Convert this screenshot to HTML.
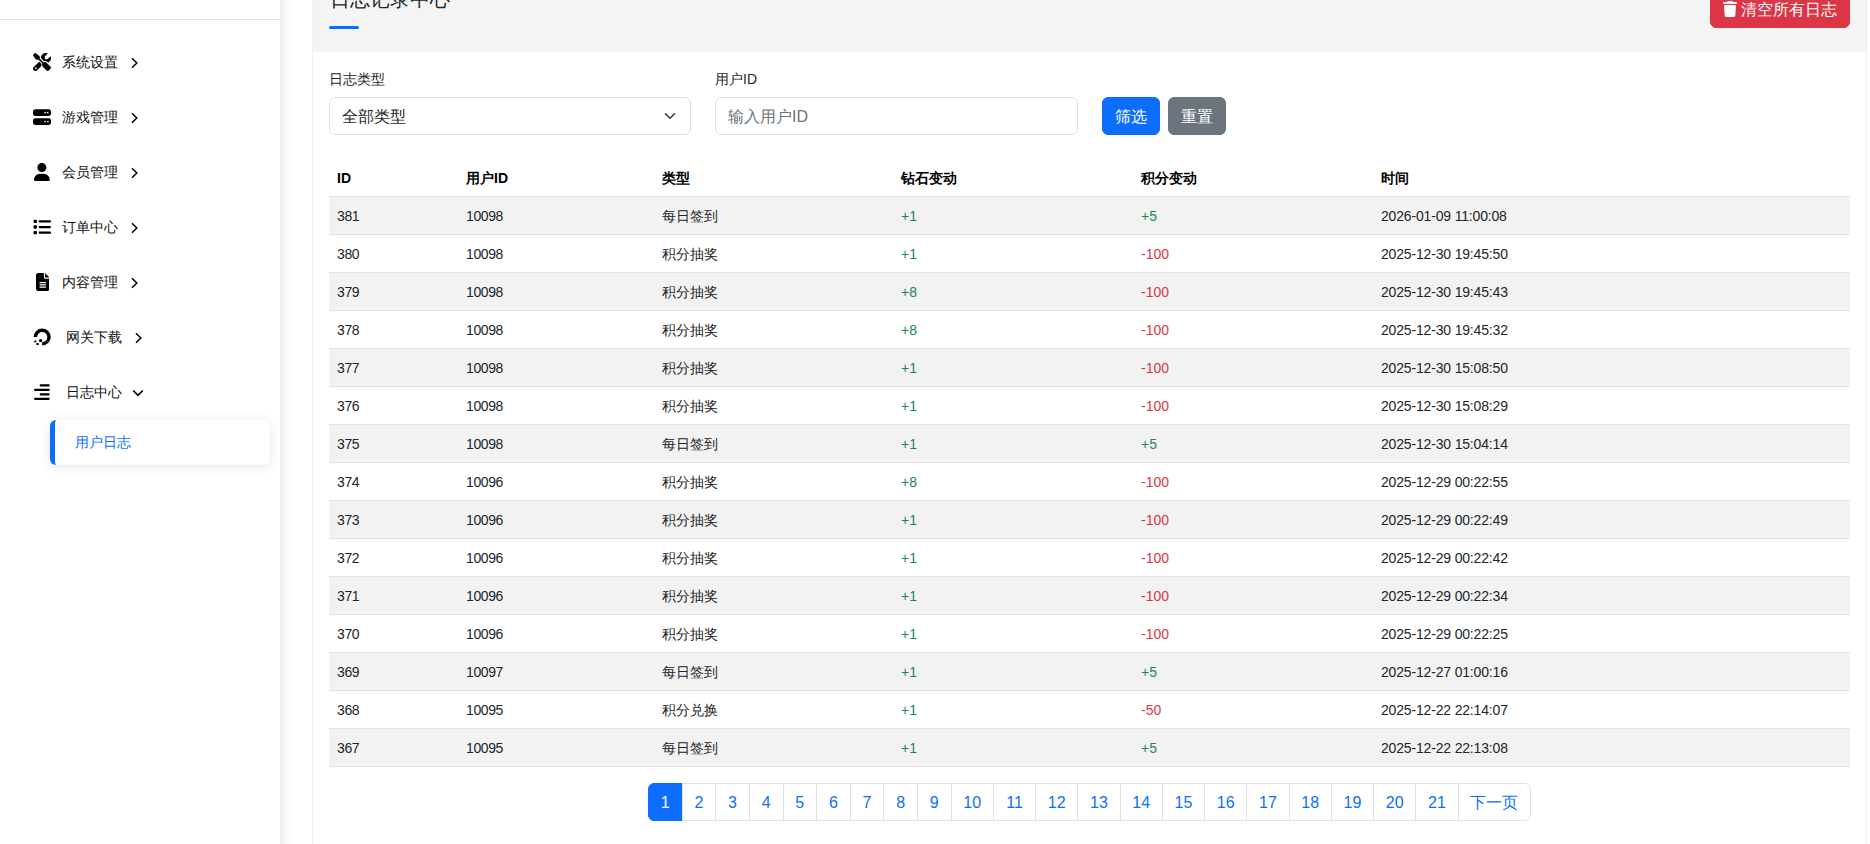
<!DOCTYPE html>
<html><head><meta charset="utf-8">
<style>
*{box-sizing:border-box;margin:0;padding:0}
html,body{width:1870px;height:844px;overflow:hidden;background:#fff;font-family:"Liberation Sans",sans-serif;color:#212529}
.sb{position:absolute;left:0;top:0;width:280px;height:844px;background:#fff}
.sbshadow{position:absolute;left:280px;top:0;width:14px;height:844px;background:linear-gradient(to right,#ececec,#fafafa 50%,#fff)}
.sbline{position:absolute;left:0;top:19px;width:280px;height:1px;background:#dee2e6}
.mtxt{position:absolute;height:20px;font-size:14px;line-height:20px;color:#111;white-space:nowrap}
.mi{position:absolute;left:0;height:20px;font-size:14px;line-height:20px;color:#212529;white-space:nowrap}
.mi svg.ic{position:absolute;left:33px;top:1px}
.mi span{position:absolute;left:62px;top:0}
.mi svg.ch{position:absolute}
.sb svg{position:absolute}
.sub{position:absolute;left:50px;top:420px;width:220px;height:45px;background:#fff;border-radius:6px;border-left:5px solid #0d6efd;box-shadow:0 2px 12px rgba(0,0,0,.1)}
.sub span{position:absolute;left:20px;top:12px;font-size:14px;line-height:20px;color:#0d6efd}
.card{position:absolute;left:312px;top:0;width:1555px;height:844px;border-left:1px solid #f0f0f0;border-right:1px solid #f0f0f0;background:#fff}
.chead{position:absolute;left:0;top:0;width:100%;height:52px;background:#f4f4f4}
.title{position:absolute;left:17px;top:-15px;font-size:20px;line-height:28px;color:#212529;white-space:nowrap}
.uline{position:absolute;left:16px;top:26px;width:30px;height:3px;border-radius:2px;background:#0d6efd}
.btn{position:absolute;height:38px;border-radius:6px;font-size:16px;line-height:36px;padding-top:1px;color:#fff;border:1px solid transparent;text-align:center;white-space:nowrap}
.lbl{position:absolute;top:69px;font-size:14px;line-height:20px;color:#212529;white-space:nowrap}
.fc{position:absolute;top:97px;height:38px;border:1px solid #dee2e6;border-radius:6px;background:#fff;font-size:16px;line-height:36px;padding-left:12px;padding-top:1px;white-space:nowrap}
table{position:absolute;left:329px;top:159px;width:1521px;border-collapse:collapse;font-size:14px;table-layout:fixed}
th,td{padding:9px 8px 7px;line-height:21px;text-align:left;border-bottom:1px solid #dee2e6;white-space:nowrap}
th{font-weight:bold;color:#000}
tbody tr:nth-child(odd) td{background:#f2f2f2}
tbody td:nth-child(1),tbody td:nth-child(2){letter-spacing:-0.4px}
tbody td:nth-child(6){letter-spacing:-0.17px}
.g{color:#198754}.r{color:#dc3545}
.pg{position:absolute;top:783px;left:648px;height:38px;display:flex}
.pg a{display:block;height:38px;border:1px solid #dee2e6;margin-left:-1px;color:#0d6efd;font-size:16px;line-height:36px;padding-top:1px;text-align:center;text-decoration:none;background:#fff}
.pg a:first-child{margin-left:0;border-radius:6px 0 0 6px;background:#0d6efd;border-color:#0d6efd;color:#fff}
.pg a:last-child{border-radius:0 6px 6px 0}
</style></head><body>
<div class="sb">
  <div class="sbline"></div>
<svg class="ic" style="left:33px;top:53px" width="18.00" height="18" viewBox="0 0 512 512"><path d="M78.6 5C69.1-2.4 55.6-1.5 47 7L7 47c-8.5 8.5-9.4 22-2.1 31.6l80 104c4.5 5.9 11.6 9.4 19 9.4h54.1l109 109c-14.7 29-10 65.4 14.3 89.6l112 112c12.5 12.5 32.8 12.5 45.3 0l64-64c12.5-12.5 12.5-32.8 0-45.3l-112-112c-24.2-24.2-60.6-29-89.6-14.3l-109-109V104c0-7.5-3.5-14.5-9.4-19L78.6 5zM19.9 396.1C7.2 408.8 0 426.1 0 444.1C0 481.6 30.4 512 67.9 512c18 0 35.3-7.2 48-19.9L233.7 374.3c7.8-20.9 9-43.6 3.6-65.1l-61.7-61.7L19.9 396.1zM512 144c0-10.5-1.1-20.7-3.1-30.5c-2.4-11.2-16.1-14.1-24.2-6l-63.9 63.9c-3 3-7.1 4.7-11.3 4.7H352c-8.8 0-16-7.2-16-16V102.6c0-4.2 1.7-8.3 4.7-11.3l63.9-63.9c8.1-8.1 5.2-21.8-6-24.2C388.7 1.1 378.5 0 368 0C288.5 0 224 64.5 224 144l0 .8 85.3 85.3c36-9.1 75.8 .5 104 28.7L429 274.5c49-23 83-72.8 83-130.5zM56 432a24 24 0 1 1 48 0 24 24 0 1 1 -48 0z" fill="#000"/></svg><div class="mtxt" style="left:62px;top:52px">系统设置</div><svg class="ch" style="left:131px;top:56.5px" width="8" height="12" viewBox="0 0 8 12"><path d="M1 1.3 5.8 6 1 10.7" fill="none" stroke="#000" stroke-width="1.5"/></svg>
<svg class="ic" style="left:33px;top:108px" width="18.00" height="18" viewBox="0 0 512 512"><path d="M64 32C28.7 32 0 60.7 0 96v64c0 35.3 28.7 64 64 64H448c35.3 0 64-28.7 64-64V96c0-35.3-28.7-64-64-64H64zm280 72a24 24 0 1 1 0 48 24 24 0 1 1 0-48zm48 24a24 24 0 1 1 48 0 24 24 0 1 1 -48 0zM64 288c-35.3 0-64 28.7-64 64v64c0 35.3 28.7 64 64 64H448c35.3 0 64-28.7 64-64V352c0-35.3-28.7-64-64-64H64zm280 72a24 24 0 1 1 0 48 24 24 0 1 1 0-48zm56 24a24 24 0 1 1 48 0 24 24 0 1 1 -48 0z" fill="#000"/></svg><div class="mtxt" style="left:62px;top:107px">游戏管理</div><svg class="ch" style="left:131px;top:111.5px" width="8" height="12" viewBox="0 0 8 12"><path d="M1 1.3 5.8 6 1 10.7" fill="none" stroke="#000" stroke-width="1.5"/></svg>
<svg class="ic" style="left:34px;top:163px" width="15.75" height="18" viewBox="0 0 448 512"><path d="M224 256A128 128 0 1 0 224 0a128 128 0 1 0 0 256zm-45.7 48C79.8 304 0 383.8 0 482.3C0 498.7 13.3 512 29.7 512H418.3c16.4 0 29.7-13.3 29.7-29.7C448 383.8 368.2 304 269.7 304H178.3z" fill="#000"/></svg><div class="mtxt" style="left:62px;top:162px">会员管理</div><svg class="ch" style="left:131px;top:166.5px" width="8" height="12" viewBox="0 0 8 12"><path d="M1 1.3 5.8 6 1 10.7" fill="none" stroke="#000" stroke-width="1.5"/></svg>
<svg class="ic" style="left:33px;top:218px" width="18.00" height="18" viewBox="0 0 512 512"><path d="M40 48C26.7 48 16 58.7 16 72v48c0 13.3 10.7 24 24 24H88c13.3 0 24-10.7 24-24V72c0-13.3-10.7-24-24-24H40zM192 64c-17.7 0-32 14.3-32 32s14.3 32 32 32H480c17.7 0 32-14.3 32-32s-14.3-32-32-32H192zm0 160c-17.7 0-32 14.3-32 32s14.3 32 32 32H480c17.7 0 32-14.3 32-32s-14.3-32-32-32H192zm0 160c-17.7 0-32 14.3-32 32s14.3 32 32 32H480c17.7 0 32-14.3 32-32s-14.3-32-32-32H192zM16 232v48c0 13.3 10.7 24 24 24H88c13.3 0 24-10.7 24-24V232c0-13.3-10.7-24-24-24H40c-13.3 0-24 10.7-24 24zM40 368c-13.3 0-24 10.7-24 24v48c0 13.3 10.7 24 24 24H88c13.3 0 24-10.7 24-24V392c0-13.3-10.7-24-24-24H40z" fill="#000"/></svg><div class="mtxt" style="left:62px;top:217px">订单中心</div><svg class="ch" style="left:131px;top:221.5px" width="8" height="12" viewBox="0 0 8 12"><path d="M1 1.3 5.8 6 1 10.7" fill="none" stroke="#000" stroke-width="1.5"/></svg>
<svg class="ic" style="left:35.5px;top:273px" width="13.50" height="18" viewBox="0 0 384 512"><path d="M64 0C28.7 0 0 28.7 0 64V448c0 35.3 28.7 64 64 64H320c35.3 0 64-28.7 64-64V160H256c-17.7 0-32-14.3-32-32V0H64zM256 0V128H384L256 0zM112 256H272c8.8 0 16 7.2 16 16s-7.2 16-16 16H112c-8.8 0-16-7.2-16-16s7.2-16 16-16zm0 64H272c8.8 0 16 7.2 16 16s-7.2 16-16 16H112c-8.8 0-16-7.2-16-16s7.2-16 16-16zm0 64H272c8.8 0 16 7.2 16 16s-7.2 16-16 16H112c-8.8 0-16-7.2-16-16s7.2-16 16-16z" fill="#000"/></svg><div class="mtxt" style="left:62px;top:272px">内容管理</div><svg class="ch" style="left:131px;top:276.5px" width="8" height="12" viewBox="0 0 8 12"><path d="M1 1.3 5.8 6 1 10.7" fill="none" stroke="#000" stroke-width="1.5"/></svg>
<svg class="ic" style="left:33px;top:328px" width="18" height="18" viewBox="0 0 18 18"><path d="M9.2 17.6V14.2A5.1 5.1 0 1 0 4.1 9.1H0.7A8.5 8.5 0 1 1 9.2 17.6Z" fill="#000"/><rect x="6.2" y="11.2" width="2.9" height="2.9" fill="#000"/><rect x="3.4" y="15" width="2.3" height="2" fill="#000"/><rect x="1.3" y="12.5" width="2" height="1.9" fill="#000"/></svg><div class="mtxt" style="left:66px;top:327px">网关下载</div><svg class="ch" style="left:135px;top:331.5px" width="8" height="12" viewBox="0 0 8 12"><path d="M1 1.3 5.8 6 1 10.7" fill="none" stroke="#000" stroke-width="1.5"/></svg>
<svg class="ic" style="left:34px;top:383px" width="15.75" height="18" viewBox="0 0 448 512"><path d="M448 64c0 17.7-14.3 32-32 32H192c-17.7 0-32-14.3-32-32s14.3-32 32-32H416c17.7 0 32 14.3 32 32zm0 256c0 17.7-14.3 32-32 32H192c-17.7 0-32-14.3-32-32s14.3-32 32-32H416c17.7 0 32 14.3 32 32zM0 192c0-17.7 14.3-32 32-32H416c17.7 0 32 14.3 32 32s-14.3 32-32 32H32c-17.7 0-32-14.3-32-32zM448 448c0 17.7-14.3 32-32 32H32c-17.7 0-32-14.3-32-32s14.3-32 32-32H416c17.7 0 32 14.3 32 32z" fill="#000"/></svg><div class="mtxt" style="left:66px;top:382px">日志中心</div><svg class="ch" style="left:132px;top:388.5px" width="12" height="8" viewBox="0 0 12 8"><path d="M1.2 1.5 6 6.3 10.8 1.5" fill="none" stroke="#000" stroke-width="1.7"/></svg>
<div class="sub"><span>用户日志</span></div>
</div>
<div class="sbshadow"></div>
<div class="card">
  <div class="chead"></div>
  <div class="title">日志记录中心</div>
  <div class="uline"></div>
</div>
<div class="btn" style="left:1710px;top:-10px;width:140px;background:#dc3545;border-color:#dc3545"></div>
<svg style="position:absolute;left:1723px;top:1px" width="14" height="16" viewBox="0 0 448 512"><path fill="#fff" d="M135.2 17.7L128 32H32C14.3 32 0 46.3 0 64S14.3 96 32 96H416c17.7 0 32-14.3 32-32s-14.3-32-32-32H320l-7.2-14.3C307.4 6.8 296.3 0 284.2 0H163.8c-12.1 0-23.2 6.8-28.6 17.7zM416 128H32L53.2 467c1.6 25.3 22.6 45 47.9 45H346.9c25.3 0 46.3-19.7 47.9-45L416 128z"/></svg>
<div style="position:absolute;left:1741px;top:0px;font-size:16px;line-height:20px;color:#fff;white-space:nowrap">清空所有日志</div>
<div class="lbl" style="left:329px">日志类型</div>
<div class="fc" style="left:329px;width:362px">全部类型</div>
<svg style="position:absolute;left:662px;top:110px" width="16" height="12" viewBox="0 0 16 16"><path fill="none" stroke="#343a40" stroke-linecap="round" stroke-linejoin="round" stroke-width="2" d="m2 5 6 6 6-6"/></svg>
<div class="lbl" style="left:715px">用户ID</div>
<div class="fc" style="left:715px;width:363px;color:#6c757d">输入用户ID</div>
<div class="btn" style="left:1102px;top:97px;width:58px;background:#0d6efd;border-color:#0d6efd">筛选</div>
<div class="btn" style="left:1168px;top:97px;width:58px;background:#6c757d;border-color:#6c757d">重置</div>
<table>
<colgroup><col style="width:129px"><col style="width:196px"><col style="width:239px"><col style="width:240px"><col style="width:240px"><col></colgroup>
<thead><tr><th>ID</th><th>用户ID</th><th>类型</th><th>钻石变动</th><th>积分变动</th><th>时间</th></tr></thead><tbody>
<tr><td>381</td><td>10098</td><td>每日签到</td><td class="g">+1</td><td class="g">+5</td><td>2026-01-09 11:00:08</td></tr>
<tr><td>380</td><td>10098</td><td>积分抽奖</td><td class="g">+1</td><td class="r">-100</td><td>2025-12-30 19:45:50</td></tr>
<tr><td>379</td><td>10098</td><td>积分抽奖</td><td class="g">+8</td><td class="r">-100</td><td>2025-12-30 19:45:43</td></tr>
<tr><td>378</td><td>10098</td><td>积分抽奖</td><td class="g">+8</td><td class="r">-100</td><td>2025-12-30 19:45:32</td></tr>
<tr><td>377</td><td>10098</td><td>积分抽奖</td><td class="g">+1</td><td class="r">-100</td><td>2025-12-30 15:08:50</td></tr>
<tr><td>376</td><td>10098</td><td>积分抽奖</td><td class="g">+1</td><td class="r">-100</td><td>2025-12-30 15:08:29</td></tr>
<tr><td>375</td><td>10098</td><td>每日签到</td><td class="g">+1</td><td class="g">+5</td><td>2025-12-30 15:04:14</td></tr>
<tr><td>374</td><td>10096</td><td>积分抽奖</td><td class="g">+8</td><td class="r">-100</td><td>2025-12-29 00:22:55</td></tr>
<tr><td>373</td><td>10096</td><td>积分抽奖</td><td class="g">+1</td><td class="r">-100</td><td>2025-12-29 00:22:49</td></tr>
<tr><td>372</td><td>10096</td><td>积分抽奖</td><td class="g">+1</td><td class="r">-100</td><td>2025-12-29 00:22:42</td></tr>
<tr><td>371</td><td>10096</td><td>积分抽奖</td><td class="g">+1</td><td class="r">-100</td><td>2025-12-29 00:22:34</td></tr>
<tr><td>370</td><td>10096</td><td>积分抽奖</td><td class="g">+1</td><td class="r">-100</td><td>2025-12-29 00:22:25</td></tr>
<tr><td>369</td><td>10097</td><td>每日签到</td><td class="g">+1</td><td class="g">+5</td><td>2025-12-27 01:00:16</td></tr>
<tr><td>368</td><td>10095</td><td>积分兑换</td><td class="g">+1</td><td class="r">-50</td><td>2025-12-22 22:14:07</td></tr>
<tr><td>367</td><td>10095</td><td>每日签到</td><td class="g">+1</td><td class="g">+5</td><td>2025-12-22 22:13:08</td></tr>
</tbody></table>
<div class="pg"><a style="width:34.63px">1</a><a style="width:34.63px">2</a><a style="width:34.63px">3</a><a style="width:34.63px">4</a><a style="width:34.63px">5</a><a style="width:34.63px">6</a><a style="width:34.63px">7</a><a style="width:34.63px">8</a><a style="width:34.63px">9</a><a style="width:43.25px">10</a><a style="width:43.25px">11</a><a style="width:43.25px">12</a><a style="width:43.25px">13</a><a style="width:43.25px">14</a><a style="width:43.25px">15</a><a style="width:43.25px">16</a><a style="width:43.25px">17</a><a style="width:43.25px">18</a><a style="width:43.25px">19</a><a style="width:43.25px">20</a><a style="width:43.25px">21</a><a style="width:73px">下一页</a></div>
</body></html>
